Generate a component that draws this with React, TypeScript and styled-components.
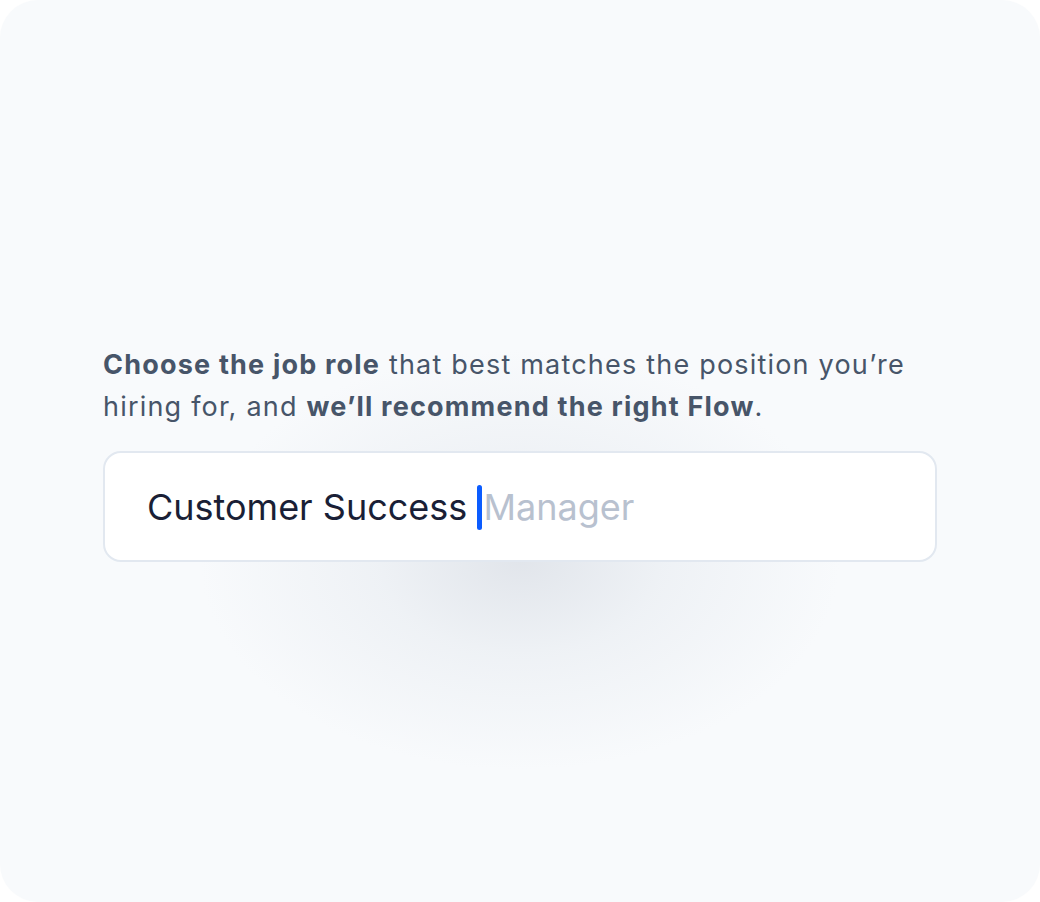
import React from 'react'
import styled, { createGlobalStyle } from 'styled-components'

const GlobalStyle = createGlobalStyle`
  html, body {
    margin: 0;
    padding: 0;
    background: #ffffff;
  }
  * { box-sizing: border-box; }
`

const Card = styled.div`
  width: 1040px;
  height: 902px;
  border-radius: 38px;
  background:
    radial-gradient(ellipse 320px 210px at 520px 560px, rgba(224, 228, 234, 0.95) 0%, rgba(232, 236, 241, 0.6) 45%, rgba(248, 250, 252, 0) 100%),
    #f8fafc;
  display: flex;
  flex-direction: column;
  padding: 344px 103px 0 103px;
  font-family: Inter, 'Noto Sans', sans-serif;
`

const Prompt = styled.p`
  margin: 0;
  max-width: 812px;
  font-size: 27px;
  line-height: 42px;
  letter-spacing: 1.2px;
  color: #475569;
  font-weight: 400;

  b {
    font-weight: 700;
    color: #475569;
  }
`

const Field = styled.div`
  margin-top: 23px;
  height: 111px;
  background: #ffffff;
  border: 2px solid #e2e8f0;
  border-radius: 18px;
  display: flex;
  align-items: center;
  padding-left: 42px;
  font-size: 36px;
`

const Typed = styled.span`
  color: #1a1f36;
  white-space: pre;
`

const Caret = styled.span`
  display: inline-block;
  width: 5px;
  height: 45px;
  border-radius: 3px;
  background: #0b5cff;
  margin: 2px 1px 0 0;
`

const Hint = styled.span`
  color: #b8c1cf;
`

export default function App() {
  return (
    <>
      <GlobalStyle />
      <Card>
        <Prompt>
          <b>Choose the job role</b> that best matches the position you’re hiring for, and{' '}
          <b>we’ll recommend the right Flow</b>.
        </Prompt>
        <Field>
          <Typed>Customer Success </Typed>
          <Caret />
          <Hint>Manager</Hint>
        </Field>
      </Card>
    </>
  )
}
